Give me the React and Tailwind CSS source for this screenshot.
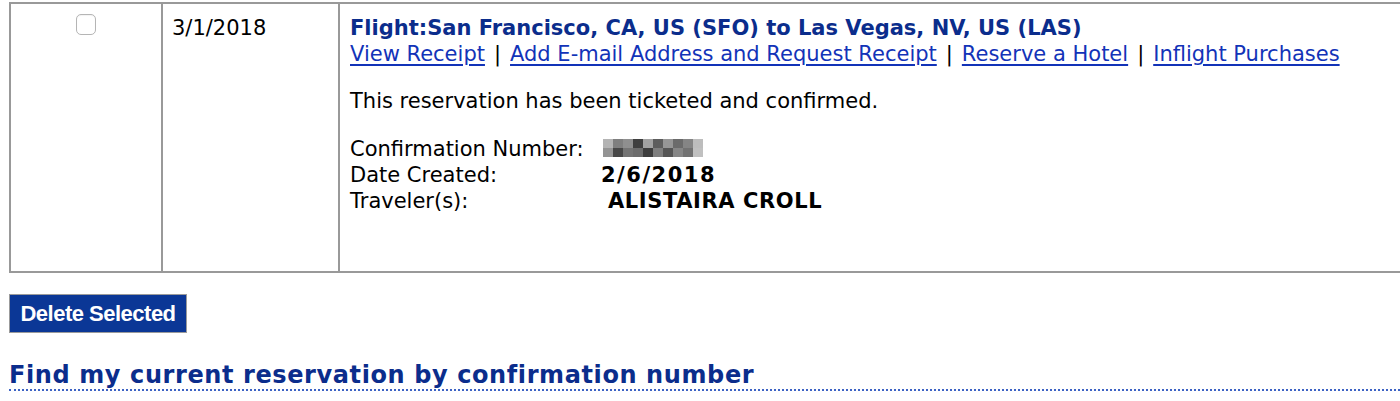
import React from 'react';

const blur = [
  ['#b4b4b4', '#7f7f7f', '#8f8f8f', '#3f3f3f', '#a2a2a2', '#5d5d5d', '#969696', '#6b6b6b', '#858585', '#bdbdbd'],
  ['#949494', '#474747', '#747474', '#6c6c6c', '#3d3d3d', '#7e7e7e', '#555555', '#868686', '#727272', '#c0c0c0'],
];

const verdana = { fontFamily: '"DejaVu Sans", Verdana, sans-serif' };

const Blurred = () => (
  <span className="inline-grid grid-cols-10 self-start mt-[3px]">
    {blur.flat().map((c, i) => (
      <span key={i} className="block w-[10px] h-[9px]" style={{ backgroundColor: c }} />
    ))}
  </span>
);

const Links = () => {
  const items = ['View Receipt', 'Add E-mail Address and Request Receipt', 'Reserve a Hotel', 'Inflight Purchases'];
  return (
    <div className="text-black">
      {items.map((t, i) => (
        <React.Fragment key={t}>
          {i > 0 && <span className="mx-[9px]">|</span>}
          <a href="#" className="text-[#1233b8] underline underline-offset-[3px] decoration-[1.5px]">{t}</a>
        </React.Fragment>
      ))}
    </div>
  );
};

export default function App() {
  return (
    <div className="w-[1400px] h-[401px] overflow-hidden bg-white pt-[2px] text-[21px] leading-[26px] text-black" style={verdana}>
      <table className="ml-[9px] w-[1430px] border-collapse">
        <tbody>
          <tr className="h-[269px] align-top">
            <td className="w-[152px] border-2 border-[#999] pt-[10px] text-center">
              <span className="inline-block w-[20px] h-[21px] rounded-[5px] border border-[#b5b5b5] bg-white shadow-[inset_0_1px_1px_rgba(0,0,0,0.05)]" />
            </td>
            <td className="w-[177px] border-2 border-[#999] pl-[9px] pt-[11px]">3/1/2018</td>
            <td className="border-2 border-[#999] pl-[10px] pt-[11px]">
              <div className="font-bold text-[#0b2d8c]">Flight:San Francisco, CA, US (SFO) to Las Vegas, NV, US (LAS)</div>
              <Links />
              <p className="mt-[21px]">This reservation has been ticketed and confirmed.</p>
              <div className="mt-[22px]">
                <div className="flex">
                  <span className="w-[253px]">Confirmation Number:</span>
                  <Blurred />
                </div>
                <div className="flex">
                  <span className="w-[251px]">Date Created:</span>
                  <span className="font-bold tracking-[1.5px]">2/6/2018</span>
                </div>
                <div className="flex">
                  <span className="w-[258px]">Traveler(s):</span>
                  <span className="font-bold tracking-[0.6px]">ALISTAIRA CROLL</span>
                </div>
              </div>
            </td>
          </tr>
        </tbody>
      </table>

      <button
        type="button"
        className="mt-[21px] ml-[9px] h-[39px] w-[178px] border-[1.5px] border-[#9b9b9b] bg-[#0b3796] text-white font-bold text-[22px] leading-none tracking-[-0.5px]"
        style={{ fontFamily: '"Liberation Sans", Arial, sans-serif' }}
      >
        Delete Selected
      </button>

      <h2 className="mt-[28px] ml-[9px] pt-[1px] border-b-2 border-dotted border-[#3d63c4] text-[24px] leading-[27px] tracking-[0.6px] font-bold text-[#0b2d8c]">
        Find my current reservation by confirmation number
      </h2>
    </div>
  );
}
